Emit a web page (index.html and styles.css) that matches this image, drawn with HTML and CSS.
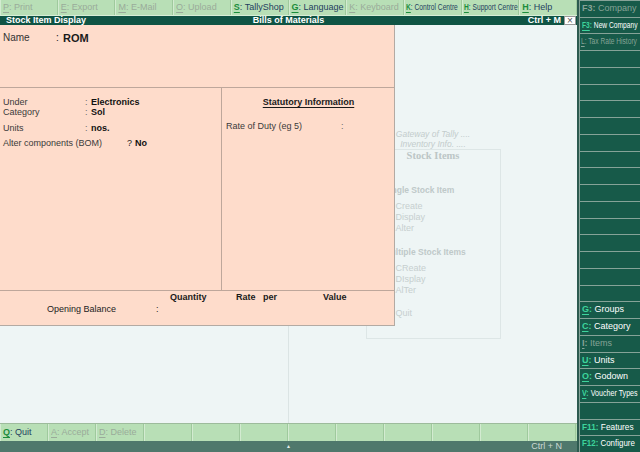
FILE: index.html
```html
<!DOCTYPE html>
<html>
<head>
<meta charset="utf-8">
<link rel="stylesheet" href="styles.css">
</head>
<body>
<div class="screen">
  <div class="main">
    <div class="topbar">
      <div class="btn off"><span class="k">P</span>: Print</div>
      <div class="btn off"><span class="k">E</span>: Export</div>
      <div class="btn off"><span class="k">M</span>: E-Mail</div>
      <div class="btn off"><span class="k">O</span>: Upload</div>
      <div class="btn"><span class="k">S</span>: TallyShop</div>
      <div class="btn"><span class="k">G</span>: Language</div>
      <div class="btn off"><span class="k">K</span>: Keyboard</div>
      <div class="btn narrow"><span class="sq sq74"><span class="k">K</span>: Control Centre</span></div>
      <div class="btn narrow"><span class="sq sq74"><span class="k">H</span>: Support Centre</span></div>
      <div class="btn"><span class="k">H</span>: Help</div>
    </div>
    <div class="titlebar">
      <span class="t-left">Stock Item Display</span>
      <span class="t-center">Bills of Materials</span>
      <span class="t-right">Ctrl + M <span class="close">×</span></span>
    </div>
    <div class="workspace">
      <div class="ws-left"></div>
      <div class="gateway">
        <div class="gw-title">Gateway of Tally ....</div>
        <div class="gw-title">Inventory Info. ....</div>
        <div class="menu">
          <div class="menu-head">Stock Items</div>
          <div class="menu-sub first">Single Stock Item</div>
          <div class="menu-item gap">Create</div>
          <div class="menu-item">Display</div>
          <div class="menu-item">Alter</div>
          <div class="menu-sub">Multiple Stock Items</div>
          <div class="menu-item gap">CReate</div>
          <div class="menu-item">DIsplay</div>
          <div class="menu-item">AlTer</div>
          <div class="menu-item quit">Quit</div>
        </div>
      </div>
      <div class="form">
        <div class="name-sec">
          <span class="lbl">Name</span><span class="colon">:</span><span class="val">ROM</span>
        </div>
        <div class="mid">
          <div class="mid-left">
            <div class="row"><span class="lbl">Under</span><span class="colon">:</span><span class="val">Electronics</span></div>
            <div class="row"><span class="lbl">Category</span><span class="colon">:</span><span class="val">Sol</span></div>
            <div class="row r3"><span class="lbl">Units</span><span class="colon">:</span><span class="val">nos.</span></div>
            <div class="row r4"><span class="lbl wide">Alter components (BOM)</span><span class="q">?</span><span class="val">No</span></div>
          </div>
          <div class="mid-right">
            <div class="stat">Statutory Information</div>
            <div class="row duty"><span class="lbl dl">Rate of Duty (eg 5)</span><span class="colon">:</span></div>
          </div>
        </div>
        <div class="bot">
          <div class="bot-head">
            <span class="h-qty">Quantity</span><span class="h-rate">Rate&nbsp;&nbsp; per</span><span class="h-val">Value</span>
          </div>
          <div class="bot-row">
            <span class="ob">Opening Balance</span><span class="colon">:</span>
          </div>
        </div>
      </div>
    </div>
    <div class="bottombar">
      <div class="btn"><span class="k">Q</span>: Quit</div>
      <div class="btn off"><span class="k">A</span>: Accept</div>
      <div class="btn off"><span class="k">D</span>: Delete</div>
      <div class="btn"></div>
      <div class="btn"></div>
      <div class="btn"></div>
      <div class="btn"></div>
      <div class="btn"></div>
      <div class="btn"></div>
      <div class="btn"></div>
      <div class="btn"></div>
      <div class="btn"></div>
    </div>
    <div class="statusbar">
      <span></span>
      <span class="arrow">▲</span>
      <span class="s-right">Ctrl + N</span>
    </div>
  </div>
  <div class="side">
    <div class="slot off"><span class="sk">F3:</span> Company</div>
    <div class="slot"><span class="sq sq74"><span class="sk u">F3</span><span class="sk">:</span> New Company</span></div>
    <div class="slot off small"><span class="sq sq78"><span class="sk u">L</span><span class="sk">:</span> Tax Rate History</span></div>
    <div class="slot"></div>
    <div class="slot"></div>
    <div class="slot"></div>
    <div class="slot"></div>
    <div class="slot"></div>
    <div class="slot"></div>
    <div class="slot"></div>
    <div class="slot"></div>
    <div class="slot"></div>
    <div class="slot"></div>
    <div class="slot"></div>
    <div class="slot"></div>
    <div class="slot"></div>
    <div class="slot"></div>
    <div class="slot"></div>
    <div class="slot"><span class="sk u">G</span><span class="sk">:</span> Groups</div>
    <div class="slot"><span class="sk u">C</span><span class="sk">:</span> Category</div>
    <div class="slot off"><span class="sk u">I</span><span class="sk">:</span> Items</div>
    <div class="slot"><span class="sk u">U</span><span class="sk">:</span> Units</div>
    <div class="slot"><span class="sk u">O</span><span class="sk">:</span> Godown</div>
    <div class="slot"><span class="sq sq79"><span class="sk u">V</span><span class="sk">:</span> Voucher Types</span></div>
    <div class="slot"></div>
    <div class="slot"><span class="sq sq92"><span class="sk">F11:</span> Features</span></div>
    <div class="slot"><span class="sq sq88"><span class="sk">F12:</span> Configure</span></div>
  </div>
</div>
</body>
</html>
```

FILE: styles.css
```css
* { box-sizing: border-box; }
html, body { margin: 0; padding: 0; }
body {
  width: 640px;
  height: 452px;
  overflow: hidden;
  font-family: "Liberation Sans", Arial, sans-serif;
  font-size: 9px;
  background: #eef5f5;
}
.screen { display: flex; width: 640px; height: 452px; }
.main { width: 577px; display: flex; flex-direction: column; }

/* horizontally condensed labels (narrow font look) */
.sq { display: inline-block; transform-origin: 0 50%; white-space: nowrap; }
.sq74 { transform: scaleX(0.74); }
.sq78 { transform: scaleX(0.78); }
.sq79 { transform: scaleX(0.79); }
.sq88 { transform: scaleX(0.88); }
.sq92 { transform: scaleX(0.92); }

/* button bars */
.topbar {
  height: 16px;
  display: grid;
  grid-template-columns: repeat(10, 1fr);
  background: #b8dfb6;
  border-bottom: 1px solid #d8eed6;
}
.btn {
  border-left: 1px solid #d3ebd1;
  border-right: 1px solid #9fc99d;
  padding-left: 2px;
  line-height: 14px;
  white-space: nowrap;
  overflow: hidden;
  color: #24405e;
  font-size: 9px;
}
.btn.narrow { padding-left: 1px; }
.btn.off { color: #9aab9a; }
.btn .k {
  color: #1c8c3c;
  font-weight: bold;
  text-decoration: underline;
  text-underline-offset: 2px;
}
.btn.off .k { color: #9aab9a; font-weight: normal; }

.titlebar {
  height: 9px;
  background: #0f5444;
  color: #fff;
  font-weight: bold;
  font-size: 9px;
  line-height: 9px;
  display: grid;
  grid-template-columns: 1fr auto 1fr;
}
.t-left { padding-left: 6px; }
.t-right { justify-self: end; display: flex; align-items: center; padding-right: 1px; }
.close {
  width: 12px;
  height: 9px;
  margin-left: 3px;
  background: #fff;
  color: #555;
  font-weight: normal;
  font-size: 10px;
  line-height: 8px;
  text-align: center;
  border: 1px solid #999;
}

/* workspace */
.workspace {
  flex: 1;
  position: relative;
  display: flex;
  background: #eef5f5;
}
.ws-left { width: 288px; }
.gateway {
  flex: 1;
  border-left: 1px solid #dbe4e4;
  display: flex;
  flex-direction: column;
  align-items: center;
  padding-top: 104px;
  color: #c3cccc;
}
.gw-title { font-style: italic; font-size: 8.5px; line-height: 10px; }
.menu {
  width: 135px;
  height: 190px;
  border: 1px solid #dde6e6;
  padding-left: 29px;
}
.menu-head {
  margin-left: -29px;
  text-align: center;
  font-family: "Liberation Serif", serif;
  font-weight: bold;
  font-size: 10.5px;
  line-height: 12px;
  color: #bcc6c6;
}
.menu-sub {
  margin-left: -12px;
  margin-top: 13px;
  font-weight: bold;
  font-size: 8.5px;
  line-height: 10px;
  color: #bfc9c9;
  white-space: nowrap;
}
.menu-sub.first { margin-top: 23px; }
.menu-item { font-size: 9px; line-height: 11px; color: #c6cfcf; }
.menu-item.gap { margin-top: 6px; }
.menu-item.quit { margin-top: 12px; }

/* form window */
.form {
  position: absolute;
  left: 0;
  top: 0;
  width: 395px;
  background: #fedccb;
  border-right: 1px solid #b3aaa3;
  border-bottom: 1px solid #b3aaa3;
  display: flex;
  flex-direction: column;
  color: #1a1a1a;
}
.name-sec {
  height: 63px;
  border-bottom: 1px solid #bea79b;
  padding: 7px 0 0 3px;
  font-size: 10px;
  line-height: 12px;
  display: flex;
}
.name-sec .lbl { width: 53px; color: #333; }
.name-sec .colon { width: 7px; }
.name-sec .val { font-weight: bold; font-size: 11px; }
.mid {
  height: 203px;
  display: grid;
  grid-template-columns: 222px 1fr;
  border-bottom: 1px solid #bea79b;
}
.mid-left { border-right: 1px solid #bea79b; padding: 9px 0 0 3px; }
.row { display: flex; line-height: 10px; height: 10px; white-space: nowrap; }
.row .lbl { width: 82px; color: #3a3a3a; }
.row .lbl.wide { width: 124px; }
.row .colon { width: 6px; color: #666; }
.row .q { width: 8px; color: #222; }
.row .val { font-weight: bold; color: #111; }
.row.r3 { margin-top: 6px; }
.row.r4 { margin-top: 5px; }
.mid-right { padding-top: 9px; }
.stat {
  text-align: center;
  font-weight: bold;
  line-height: 11px;
  text-decoration: underline;
  text-underline-offset: 2px;
  padding-left: 1px;
}
.row.duty { margin-top: 13px; padding-left: 4px; }
.row .lbl.dl { width: 115px; }
.bot { height: 34px; padding-top: 1px; }
.bot-head { display: flex; padding-left: 170px; font-weight: bold; line-height: 10px; white-space: nowrap; }
.h-qty { width: 66px; }
.h-rate { width: 87px; }
.bot-row { display: flex; padding-left: 47px; margin-top: 2px; line-height: 10px; color: #222; }
.ob { width: 109px; }

/* bottom */
.bottombar {
  height: 18px;
  border-top: 1px solid #9dbb9c;
  display: grid;
  grid-template-columns: repeat(12, 48px);
  background: #b8dfb6;
}
.bottombar .btn { line-height: 16px; }
.statusbar {
  height: 11px;
  background: #4f786c;
  color: #cdd8d3;
  display: grid;
  grid-template-columns: 1fr auto 1fr;
  align-items: center;
  line-height: 11px;
}
.arrow { font-size: 5px; color: #e6eeea; }
.s-right { justify-self: end; padding-right: 15px; font-size: 9px; }

/* side panel */
.side {
  width: 63px;
  background: #2c5a4f;
  padding-left: 2px;
  display: grid;
  grid-template-rows: repeat(27, 1fr);
}
.slot {
  background: #175a49;
  border-left: 1px solid #86a398;
  border-top: 1px solid #86a398;
  color: #fff;
  padding-left: 2px;
  font-size: 9px;
  line-height: 14px;
  white-space: nowrap;
  overflow: hidden;
}
.slot.small { font-size: 8.5px; padding-left: 1px; }
.slot .sk { color: #3dd49c; font-weight: bold; }
.slot .sk.u { text-decoration: underline; text-underline-offset: 2px; }
.slot.off { color: #86a396; }
.slot.off .sk { color: #86a396; }
.slot.off.small .sk { font-weight: normal; }
```
